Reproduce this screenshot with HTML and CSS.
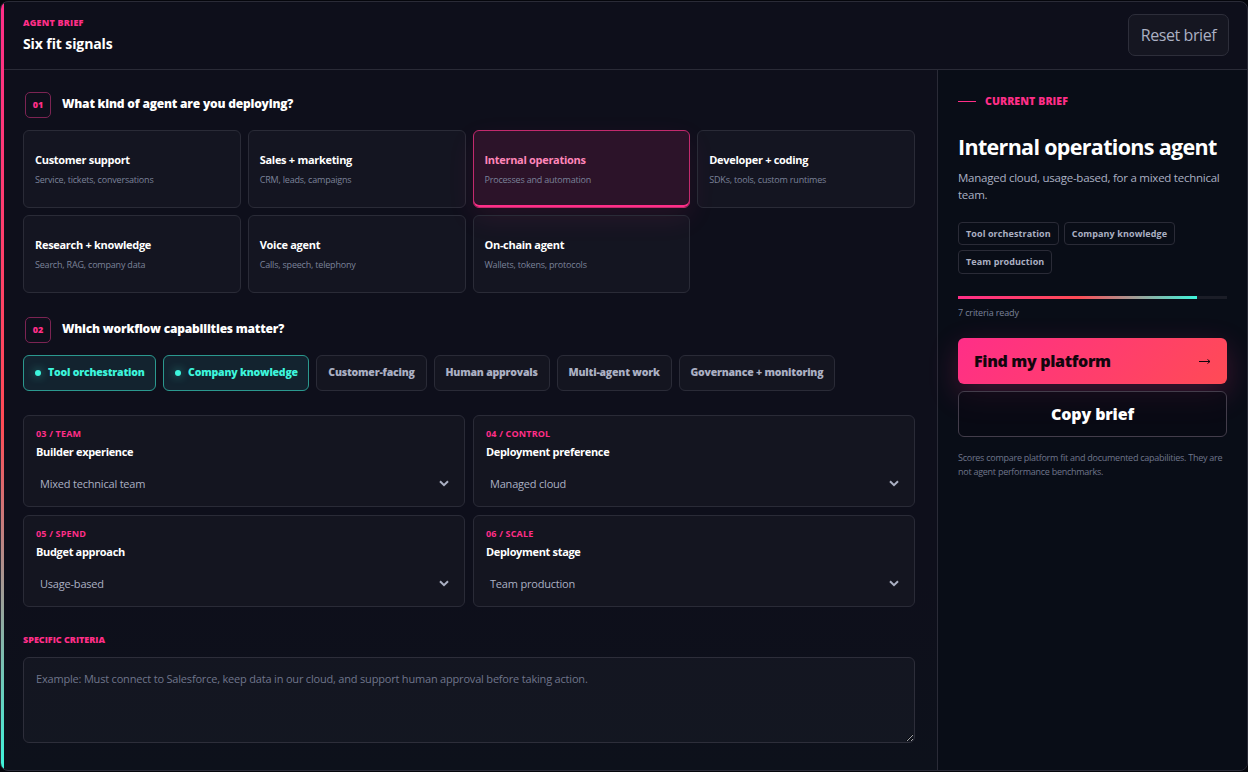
FILE: index.html
```html
<!DOCTYPE html>
<html lang="en">
<head>
<meta charset="UTF-8" />
<meta name="viewport" content="width=device-width, initial-scale=1" />
<title>Agent brief</title>
<link rel="stylesheet" href="styles.css">
</head>
<body>

<main class="panel">
  <header class="panel-header">
    <div>
      <p class="eyebrow">AGENT BRIEF</p>
      <h1>Six fit signals</h1>
    </div>
    <button class="reset" type="button">Reset brief</button>
  </header>

  <div class="panel-body">
    <form class="questions">
      <section class="question">
        <h2><span class="step">01</span><span class="q-text">What kind of agent are you deploying?</span></h2>
        <div class="card-grid">
          <div class="card"><strong>Customer support</strong><small>Service, tickets, conversations</small></div>
          <div class="card"><strong>Sales + marketing</strong><small>CRM, leads, campaigns</small></div>
          <div class="card selected"><strong>Internal operations</strong><small>Processes and automation</small></div>
          <div class="card"><strong>Developer + coding</strong><small>SDKs, tools, custom runtimes</small></div>
          <div class="card"><strong>Research + knowledge</strong><small>Search, RAG, company data</small></div>
          <div class="card"><strong>Voice agent</strong><small>Calls, speech, telephony</small></div>
          <div class="card"><strong>On-chain agent</strong><small>Wallets, tokens, protocols</small></div>
        </div>
      </section>

      <section class="question">
        <h2><span class="step">02</span><span class="q-text">Which workflow capabilities matter?</span></h2>
        <div class="chips">
          <span class="chip active"><i class="dot"></i><b>Tool orchestration</b></span>
          <span class="chip active"><i class="dot"></i><b>Company knowledge</b></span>
          <span class="chip"><b>Customer-facing</b></span>
          <span class="chip"><b>Human approvals</b></span>
          <span class="chip"><b>Multi-agent work</b></span>
          <span class="chip"><b>Governance + monitoring</b></span>
        </div>
      </section>

      <div class="fields">
        <div class="field">
          <span class="field-step">03 / TEAM</span>
          <span class="field-label">Builder experience</span>
          <div class="select"><span>Mixed technical team</span><svg viewBox="0 0 10 7"><path d="M1 1.2 5 5.2 9 1.2"/></svg></div>
        </div>
        <div class="field">
          <span class="field-step">04 / CONTROL</span>
          <span class="field-label">Deployment preference</span>
          <div class="select"><span>Managed cloud</span><svg viewBox="0 0 10 7"><path d="M1 1.2 5 5.2 9 1.2"/></svg></div>
        </div>
        <div class="field">
          <span class="field-step">05 / SPEND</span>
          <span class="field-label">Budget approach</span>
          <div class="select"><span>Usage-based</span><svg viewBox="0 0 10 7"><path d="M1 1.2 5 5.2 9 1.2"/></svg></div>
        </div>
        <div class="field">
          <span class="field-step">06 / SCALE</span>
          <span class="field-label">Deployment stage</span>
          <div class="select"><span>Team production</span><svg viewBox="0 0 10 7"><path d="M1 1.2 5 5.2 9 1.2"/></svg></div>
        </div>
      </div>

      <label class="criteria">
        <span class="criteria-label">SPECIFIC CRITERIA</span>
        <textarea placeholder="Example: Must connect to Salesforce, keep data in our cloud, and support human approval before taking action."></textarea>
      </label>
    </form>

    <aside class="summary">
      <p class="summary-eyebrow">CURRENT BRIEF</p>
      <h3>Internal operations agent</h3>
      <p class="summary-text">Managed cloud, usage-based, for a mixed technical team.</p>
      <div class="tags">
        <span class="tag">Tool orchestration</span>
        <span class="tag">Company knowledge</span>
        <span class="tag">Team production</span>
      </div>
      <div class="progress"><div class="progress-fill"></div></div>
      <p class="ready">7 criteria ready</p>
      <button class="primary" type="button"><span>Find my platform</span><svg viewBox="0 0 12 8"><path d="M0 4.5h11M8.5 2.5 11 4.5 8.5 6.5"/></svg></button>
      <button class="secondary" type="button">Copy brief</button>
      <p class="note">Scores compare platform fit and documented capabilities. They are not agent performance benchmarks.</p>
    </aside>
  </div>
</main>

</body>
</html>
```
FILE: styles.css
```css
* {
  box-sizing: border-box;
}
body {
  margin: 0;
  padding: 1px 0;
  height: 772px;
  overflow: hidden;
  font-family: "Open Sans", "Noto Sans", sans-serif;
  background: #05060c;
  color: #fff;
}
h1, h2, h3, p {
  margin: 0;
}
button {
  font-family: inherit;
}
.panel {
  position: relative;
  display: flex;
  flex-direction: column;
  height: 770px;
  border: 1px solid #2a2b37;
  border-radius: 8px;
  overflow: hidden;
  background: linear-gradient(180deg, #0e0f1b 0%, #0e0f1b 75%, #0d111b 100%);
}
.panel::before {
  content: "";
  position: absolute;
  left: 0;
  top: 0;
  bottom: 0;
  width: 3px;
  background: linear-gradient(180deg, #ff2e88, #ff4b55 55%, #3df5dc);
}
.panel-header {
  display: flex;
  justify-content: space-between;
  align-items: flex-start;
  height: 68px;
  padding: 12px 18px 0 22px;
  border-bottom: 1px solid #2a2b37;
}
.eyebrow {
  margin-top: 2px;
  font-size: 9px;
  line-height: 14px;
  font-weight: 800;
  letter-spacing: 0.2px;
  color: #ff2e88;
}
h1 {
  margin-top: 4px;
  font-size: 14px;
  line-height: 20px;
  font-weight: 700;
  letter-spacing: -0.1px;
}
.reset {
  width: 101px;
  height: 42px;
  padding: 0;
  border: 1px solid #2d2e3a;
  border-radius: 7px;
  background: #151621;
  color: #abb0c3;
  font-size: 16px;
  letter-spacing: -0.4px;
}
.panel-body {
  flex: 1;
  display: flex;
}
.questions {
  flex: 1;
  padding: 22px;
}
.question {
  margin-bottom: 24px;
}
h2 {
  display: flex;
  align-items: center;
  gap: 11px;
  height: 26px;
  margin: 0 0 12px 2px;
  font-size: 12px;
  font-weight: 800;
}
.q-text {
  padding-bottom: 3px;
  letter-spacing: -0.2px;
}
.step {
  display: grid;
  place-items: center;
  width: 26px;
  height: 26px;
  padding-bottom: 2px;
  border: 1px solid #7c2453;
  border-radius: 5px;
  color: #ff2e88;
  font-size: 9px;
}
.card-grid {
  display: grid;
  grid-template-columns: repeat(4, 1fr);
  gap: 7px;
}
.card {
  display: flex;
  flex-direction: column;
  justify-content: center;
  gap: 6px;
  height: 78px;
  padding: 1px 11px 0;
  border: 1px solid #2a2b37;
  border-radius: 6px;
  background: rgba(255, 255, 255, 0.027);
}
.card strong {
  font-size: 11px;
  line-height: 15px;
  font-weight: 700;
  letter-spacing: -0.3px;
}
.card small {
  font-size: 9px;
  line-height: 14px;
  letter-spacing: -0.2px;
  color: #7b8299;
}
.card.selected {
  border-color: #c22a6d;
  background: #2c1329;
  box-shadow: inset 0 -2px 0 #ff2e88, 0 10px 28px rgba(255, 46, 136, 0.09);
}
.card.selected strong {
  color: #ff86b9;
}
.chips {
  display: flex;
  gap: 7px;
}
.chip {
  display: flex;
  align-items: center;
  height: 36px;
  padding: 0 10.9px;
  border: 1px solid #2a2b37;
  border-radius: 6px;
  background: #141520;
  color: #abb0c3;
  font-size: 10.5px;
  letter-spacing: -0.2px;
  white-space: nowrap;
}
.chip b {
  padding-bottom: 3px;
  font-weight: 800;
}
.chip.active {
  padding: 0 10.5px 0 11px;
  border-color: #2b998f;
  background: #13232f;
  color: #3df5dc;
}
.dot {
  width: 6px;
  height: 6px;
  margin-right: 7px;
  border-radius: 50%;
  background: #3df5dc;
  box-shadow: 0 0 10px rgba(61, 245, 220, 0.6);
}
.fields {
  display: grid;
  grid-template-columns: 1fr 1fr;
  gap: 8px;
}
.field {
  display: flex;
  flex-direction: column;
  height: 92px;
  padding: 11px 12px 0;
  border: 1px solid #2a2b37;
  border-radius: 6px;
  background: #141520;
}
.field-step {
  font-size: 9px;
  line-height: 14px;
  font-weight: 700;
  letter-spacing: 0.17px;
  color: #ff2e88;
}
.field-label {
  margin-top: 3px;
  font-size: 11px;
  line-height: 16px;
  font-weight: 700;
  letter-spacing: -0.33px;
}
.select {
  display: flex;
  justify-content: space-between;
  align-items: center;
  margin-top: 11px;
  padding: 0 3px 0 4px;
  height: 24px;
  font-size: 11px;
  letter-spacing: -0.2px;
  color: #abb0c3;
}
.select svg {
  width: 10px;
  height: 7px;
  fill: none;
  stroke: #abb0c3;
  stroke-width: 2;
}
.criteria {
  display: block;
  margin-top: 26px;
}
.criteria-label {
  display: block;
  font-size: 9px;
  line-height: 14px;
  font-weight: 800;
  color: #ff2e88;
}
textarea {
  display: block;
  width: 100%;
  height: 86px;
  margin-top: 10px;
  padding: 12px;
  border: 1px solid #2d2e3a;
  border-radius: 6px;
  background: rgba(255, 255, 255, 0.027);
  font-family: inherit;
  font-size: 11px;
  line-height: 18px;
  letter-spacing: -0.19px;
  resize: vertical;
}
textarea::placeholder {
  color: #6f758b;
}
.summary {
  width: 310px;
  padding: 24px 20px 0;
  border-left: 1px solid #2a2b37;
  background: #090d17;
}
.summary-eyebrow {
  display: flex;
  align-items: center;
  gap: 9px;
  font-size: 10.5px;
  line-height: 14px;
  font-weight: 800;
  letter-spacing: 0.1px;
  color: #ff2e88;
}
.summary-eyebrow::before {
  content: "";
  width: 18px;
  height: 1px;
  background: #ff2e88;
}
h3 {
  margin-top: 25px;
  font-size: 21.5px;
  line-height: 28px;
  font-weight: 700;
  letter-spacing: -0.68px;
  white-space: nowrap;
}
.summary-text {
  margin-top: 8px;
  font-size: 11.5px;
  line-height: 17px;
  letter-spacing: -0.25px;
  color: #abb0c3;
}
.tags {
  display: flex;
  flex-wrap: wrap;
  gap: 5px;
  margin-top: 19px;
}
.tag {
  height: 23.4px;
  padding: 0 7px;
  border: 1px solid #2a2b37;
  border-radius: 4px;
  color: #abb0c3;
  font-size: 9px;
  line-height: 21px;
  font-weight: 700;
  letter-spacing: 0.1px;
}
.progress {
  height: 3px;
  margin-top: 22px;
  background: #1b1d27;
}
.progress-fill {
  width: 89%;
  height: 3px;
  background: linear-gradient(90deg, #ff2e88, #ff4b55 50%, #3df5dc);
}
.ready {
  margin-top: 7px;
  font-size: 9px;
  line-height: 14px;
  letter-spacing: -0.14px;
  color: #7b8299;
}
.primary,
.secondary {
  display: flex;
  align-items: center;
  width: 100%;
  height: 46px;
  border-radius: 6px;
  font-size: 16px;
  font-weight: 800;
}
.primary {
  justify-content: space-between;
  margin-top: 18px;
  padding: 0 16px;
  border: 0;
  background: linear-gradient(135deg, #ff2e88, #ff4b55);
  box-shadow: 0 10px 30px rgba(255, 46, 136, 0.22);
  letter-spacing: -0.33px;
  color: #12060d;
}
.primary svg {
  width: 12px;
  height: 8px;
  fill: none;
  stroke: #12060d;
}
.secondary {
  justify-content: center;
  margin-top: 7px;
  border: 1px solid #433d4b;
  background: rgba(9, 9, 19, 0.6);
  letter-spacing: -0.15px;
  color: #fff;
}
.note {
  margin-top: 14px;
  font-size: 9px;
  line-height: 14px;
  letter-spacing: -0.26px;
  color: #6f758b;
}
```
